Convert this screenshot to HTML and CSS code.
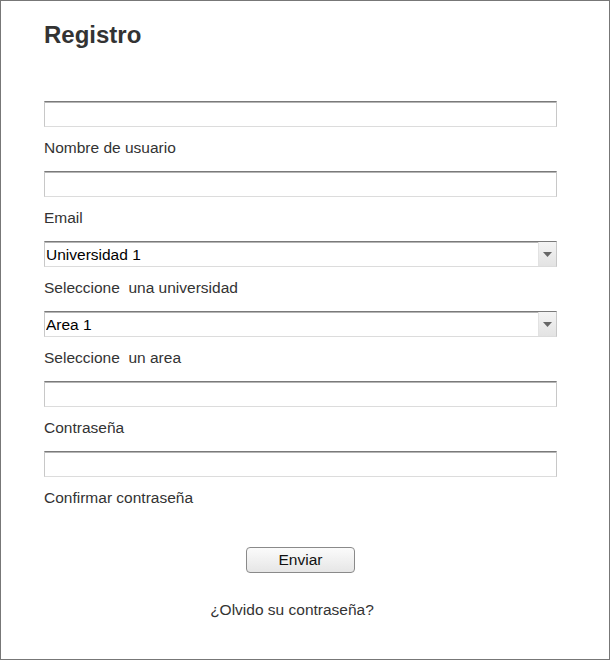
FILE: index.html
```html
<!DOCTYPE html>
<html lang="es">
<head>
<meta charset="utf-8">
<title>Registro</title>
<link rel="stylesheet" href="styles.css">
</head>
<body>
<div class="page">
  <h1 class="title">Registro</h1>
  <form class="form">
    <div class="field">
      <input class="text-input" type="text">
      <label class="label">Nombre de usuario</label>
    </div>
    <div class="field">
      <input class="text-input" type="text">
      <label class="label">Email</label>
    </div>
    <div class="field">
      <div class="select-box">
        <select class="select"><option>Universidad 1</option></select>
        <span class="arrow"><svg width="9" height="5" viewBox="0 0 9 5"><path d="M0 0H9L4.5 5Z" fill="#666"/></svg></span>
      </div>
      <label class="label">Seleccione&nbsp; una universidad</label>
    </div>
    <div class="field">
      <div class="select-box">
        <select class="select"><option>Area 1</option></select>
        <span class="arrow"><svg width="9" height="5" viewBox="0 0 9 5"><path d="M0 0H9L4.5 5Z" fill="#666"/></svg></span>
      </div>
      <label class="label">Seleccione&nbsp; un area</label>
    </div>
    <div class="field">
      <input class="text-input" type="password">
      <label class="label">Contraseña</label>
    </div>
    <div class="field">
      <input class="text-input" type="password">
      <label class="label">Confirmar contraseña</label>
    </div>
    <div class="actions">
      <button class="button" type="button">Enviar</button>
    </div>
    <div class="forgot">¿Olvido su contraseña?</div>
  </form>
</div>
</body>
</html>
```
FILE: styles.css
```css
html, body {
  margin: 0;
  padding: 0;
  background: #fff;
}
.page {
  box-sizing: border-box;
  width: 610px;
  height: 660px;
  border: 1px solid #777;
  padding: 0 52px 0 43px;
  font-family: "Liberation Sans", Arial, sans-serif;
  color: #333;
}
.title {
  margin: 20px 0 0;
  font-size: 24px;
  line-height: 28px;
  font-weight: bold;
  color: #333;
}
.form {
  margin-top: 52px;
  display: flex;
  flex-direction: column;
}
.field {
  display: flex;
  flex-direction: column;
}
.text-input, .select-box {
  box-sizing: border-box;
  width: 513px;
  height: 26px;
  margin: 0;
  border: 1px solid;
  border-color: #7a7a7a #c8c8c8 #dcdcdc #c8c8c8;
  box-shadow: inset 0 1px 0 #b5b5b5;
  background: #fff;
  outline: none;
  padding: 0 2px;
}
.select-box {
  display: flex;
  padding: 0;
}
.select {
  flex: 1;
  appearance: none;
  -webkit-appearance: none;
  border: none;
  background: transparent;
  margin: 0;
  padding: 0 1px;
  font-family: "Liberation Sans", Arial, sans-serif;
  font-size: 15.5px;
  color: #000;
  outline: none;
}
.arrow {
  width: 17px;
  border-left: 1px solid #e2e2e2;
  background: linear-gradient(#f4f4f4, #e3e3e3);
  display: flex;
  align-items: center;
  justify-content: center;
}
.label {
  font-size: 15.5px;
  line-height: 18px;
  padding: 12px 0 14px;
  color: #333;
}
.actions {
  display: flex;
  justify-content: center;
  margin-top: 26px;
}
.button {
  box-sizing: border-box;
  width: 109px;
  height: 26px;
  border: 1px solid #8a8a8a;
  border-radius: 4px;
  background: linear-gradient(#fbfbfb, #e6e6e6);
  font-family: "Liberation Sans", Arial, sans-serif;
  font-size: 15.5px;
  color: #111;
  padding: 0;
}
.forgot {
  margin-top: 28px;
  text-align: center;
  padding-right: 17px;
  font-size: 15.5px;
  line-height: 18px;
  color: #333;
}
```
